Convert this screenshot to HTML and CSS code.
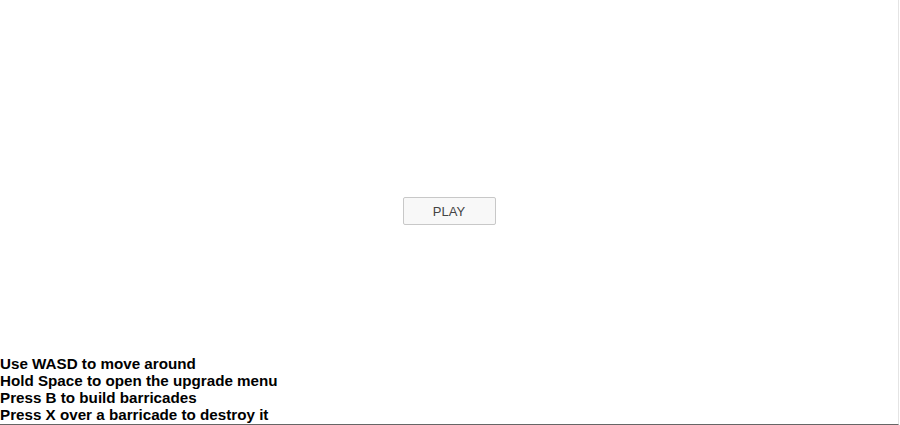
FILE: index.html
```html
<!DOCTYPE html>
<html lang="en">

<head>
  <meta charset="UTF-8">
  <meta name="viewport" content="width=device-width, initial-scale=1.0">
  <title>Barricades</title>
  <link rel="stylesheet" href="styles.css">
</head>

<body>
  <div class="game">

    <div class="menu">
      <button class="play-btn" type="button">PLAY</button>
    </div>

    <div class="help">
      <p>Use WASD to move around</p>
      <p>Hold Space to open the upgrade menu</p>
      <p>Press B to build barricades</p>
      <p>Press X over a barricade to destroy it</p>
    </div>

  </div>
</body>

</html>
```

FILE: styles.css
```css
* {
  padding: 0;
  margin: 0;
  box-sizing: border-box;
}

body {
  font-family: "Liberation Sans", Arial, sans-serif;
  background-color: white;
  overflow: hidden;
}

.game {
  position: relative;
  width: 899px;
  height: 425px;
  border-right: 1px solid #e4e4e4;
  border-bottom: 1px solid #666;
}

.menu {
  display: flex;
  align-items: center;
  justify-content: center;
  height: 100%;
  padding-bottom: 3px;
}

.play-btn {
  width: 93px;
  height: 28px;
  padding-top: 2px;
  border: 1px solid #c8c8c8;
  border-radius: 2px;
  background-color: #f8f8f8;
  color: #444;
  font-family: inherit;
  font-size: 13px;
  cursor: pointer;
}

.help {
  position: absolute;
  left: 0;
  bottom: 1px;
  font-size: 15.2px;
  font-weight: bold;
  line-height: 17px;
  color: black;
}
```
